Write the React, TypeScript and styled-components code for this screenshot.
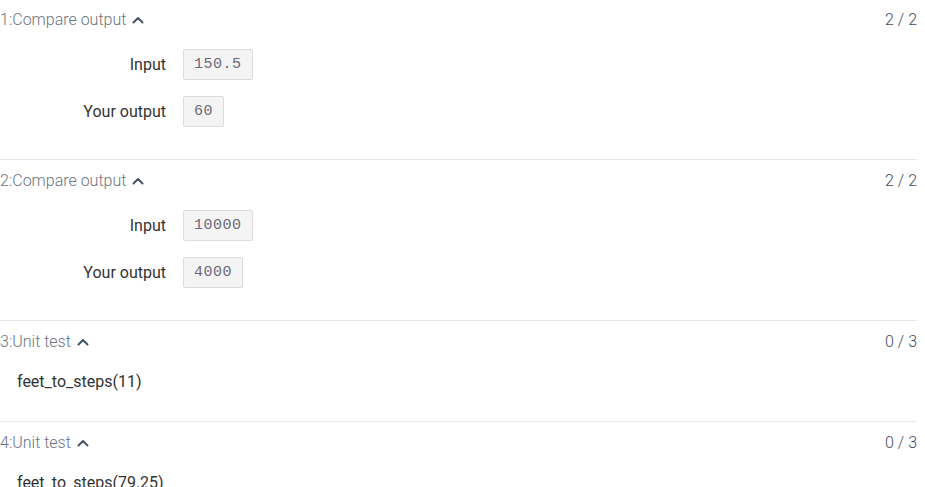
import React from "react";
import styled, { createGlobalStyle } from "styled-components";

const Global = createGlobalStyle`
  html, body { margin: 0; padding: 0; background: #fff; }
  body { font-family: Roboto, "Liberation Sans", sans-serif; }
`;

const Page = styled.div`
  width: 917px;
`;

const Section = styled.section<{ $first?: boolean }>`
  border-top: ${(p) => (p.$first ? "none" : "1px solid #e8e8e8")};
  padding-top: ${(p) => (p.$first ? "0" : "1px")};
`;

const Header = styled.div`
  display: flex;
  align-items: center;
  justify-content: space-between;
  padding-top: 9px;
  height: 22px;
  line-height: 22px;
`;

const Title = styled.div`
  display: flex;
  align-items: center;
  gap: 6px;
  font-weight: 300;
  font-size: 16px;
  color: #6b7480;
`;

const Score = styled.div`
  font-weight: 300;
  font-size: 16px;
  color: #3c4d60;
`;

const Rows = styled.div`
  display: grid;
  grid-template-columns: 166px auto;
  column-gap: 17px;
  row-gap: 16px;
  justify-content: start;
  align-items: center;
  margin-top: 18px;
  padding-bottom: 32px;
`;

const Label = styled.div`
  text-align: right;
  font-size: 16px;
  color: #333;
`;

const Value = styled.div`
  justify-self: start;
  box-sizing: border-box;
  height: 31px;
  padding: 0 10px;
  display: flex;
  align-items: center;
  background: #f4f4f4;
  border: 1px solid #dcdcdc;
  border-radius: 2px;
  font-family: "Liberation Mono", "DejaVu Sans Mono", monospace;
  font-size: 15px;
  letter-spacing: 0.5px;
  color: #6a6a78;
`;

const Call = styled.div`
  padding: 18px 0 28px 17px;
  font-size: 16px;
  color: #333;
  line-height: 22px;
`;

const Chevron = () => (
  <svg width="12" height="8" viewBox="0 0 12 8" fill="none">
    <path d="M1.5 6.5 L6 2 L10.5 6.5" stroke="#455566" strokeWidth="2" strokeLinecap="round" strokeLinejoin="round" />
  </svg>
);

type Cmp = { kind: "cmp"; n: number; input: string; output: string; score: string };
type Unit = { kind: "unit"; n: number; call: string; score: string };

const items: (Cmp | Unit)[] = [
  { kind: "cmp", n: 1, input: "150.5", output: "60", score: "2 / 2" },
  { kind: "cmp", n: 2, input: "10000", output: "4000", score: "2 / 2" },
  { kind: "unit", n: 3, call: "feet_to_steps(11)", score: "0 / 3" },
  { kind: "unit", n: 4, call: "feet_to_steps(79.25)", score: "0 / 3" },
];

export default function App() {
  return (
    <>
      <Global />
      <Page>
        {items.map((it, i) => (
          <Section key={it.n} $first={i === 0}>
            <Header>
              <Title>
                {it.n}:{it.kind === "cmp" ? "Compare output" : "Unit test"}
                <Chevron />
              </Title>
              <Score>{it.score}</Score>
            </Header>
            {it.kind === "cmp" ? (
              <Rows>
                <Label>Input</Label>
                <Value>{it.input}</Value>
                <Label>Your output</Label>
                <Value>{it.output}</Value>
              </Rows>
            ) : (
              <Call>{it.call}</Call>
            )}
          </Section>
        ))}
      </Page>
    </>
  );
}
